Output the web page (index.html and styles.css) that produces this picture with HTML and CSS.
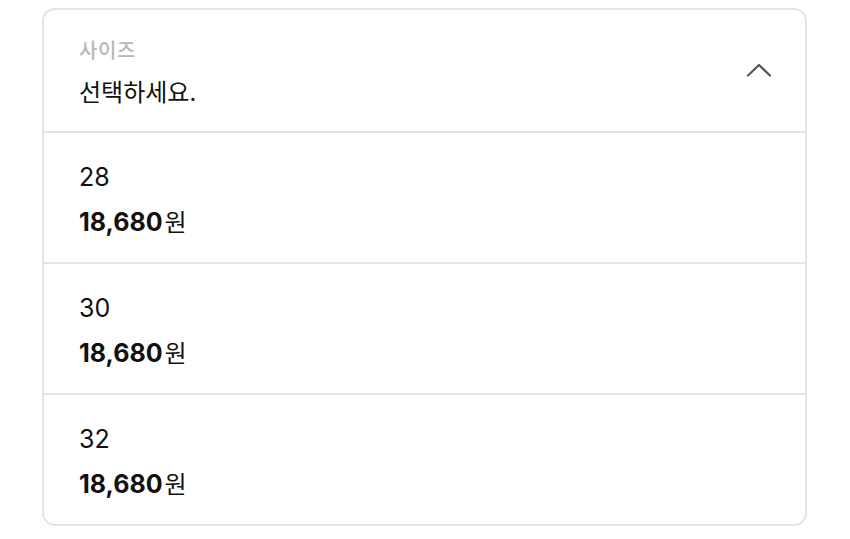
FILE: index.html
```html
<!DOCTYPE html>
<html lang="ko">
<head>
    <meta charset="UTF-8">
    <meta name="viewport" content="width=device-width, initial-scale=1.0">
    <title>사이즈 선택</title>
    <link rel="stylesheet" href="styles.css">
</head>
<body>
    <div class="option-select">
        <div class="select-header">
            <div class="select-text">
                <span class="select-label">사이즈</span>
                <span class="select-value">선택하세요.</span>
            </div>
            <svg class="chevron" width="26" height="14" viewBox="0 0 26 14">
                <polyline points="2,12.5 13,2 24,12.5" fill="none" stroke="#555" stroke-width="2.2" stroke-linecap="round" stroke-linejoin="round"/>
            </svg>
        </div>

        <ul class="option-list">
            <li class="option-item">
                <span class="option-name">28</span>
                <span class="option-price"><strong>18,680</strong>원</span>
            </li>
            <li class="option-item">
                <span class="option-name">30</span>
                <span class="option-price"><strong>18,680</strong>원</span>
            </li>
            <li class="option-item">
                <span class="option-name">32</span>
                <span class="option-price"><strong>18,680</strong>원</span>
            </li>
        </ul>
    </div>
</body>
</html>
```

FILE: styles.css
```css
body {
    font-family: "Noto Sans CJK KR", "Noto Sans", sans-serif;
    margin: 0;
    padding: 8px 0 0 42px;
    background-color: #fff;
    color: #111;
}

.option-select {
    width: 761px;
    border: 2px solid #e4e4e4;
    border-radius: 13px;
    overflow: hidden;
}

.select-header {
    height: 121px;
    display: flex;
    align-items: center;
    justify-content: space-between;
    padding: 0 33px 0 35px;
    border-bottom: 2px solid #e4e4e4;
}

.select-text {
    display: flex;
    flex-direction: column;
    gap: 14px;
    margin-top: 3px;
}

.select-label {
    font-size: 20px;
    line-height: 24px;
    letter-spacing: 0.6px;
    color: #b8b8b8;
    font-weight: 500;
}

.select-value {
    font-size: 24px;
    line-height: 30px;
}

.chevron {
    display: block;
    margin-top: -2px;
}

.option-list {
    list-style: none;
    margin: 0;
    padding: 0;
}

.option-item {
    height: 129px;
    display: flex;
    flex-direction: column;
    justify-content: center;
    gap: 14px;
    padding: 0 35px;
    border-bottom: 2px solid #e4e4e4;
}

.option-item:last-child {
    border-bottom: none;
}

.option-name {
    font-family: "Inter", "Noto Sans CJK KR", sans-serif;
    font-size: 25px;
    line-height: 30px;
    margin-top: 4px;
}

.option-price {
    font-size: 24px;
    line-height: 30px;
}

.option-price strong {
    font-family: "Inter", "Noto Sans CJK KR", sans-serif;
    font-size: 25px;
    font-weight: 700;
    margin-right: 2px;
}
```
